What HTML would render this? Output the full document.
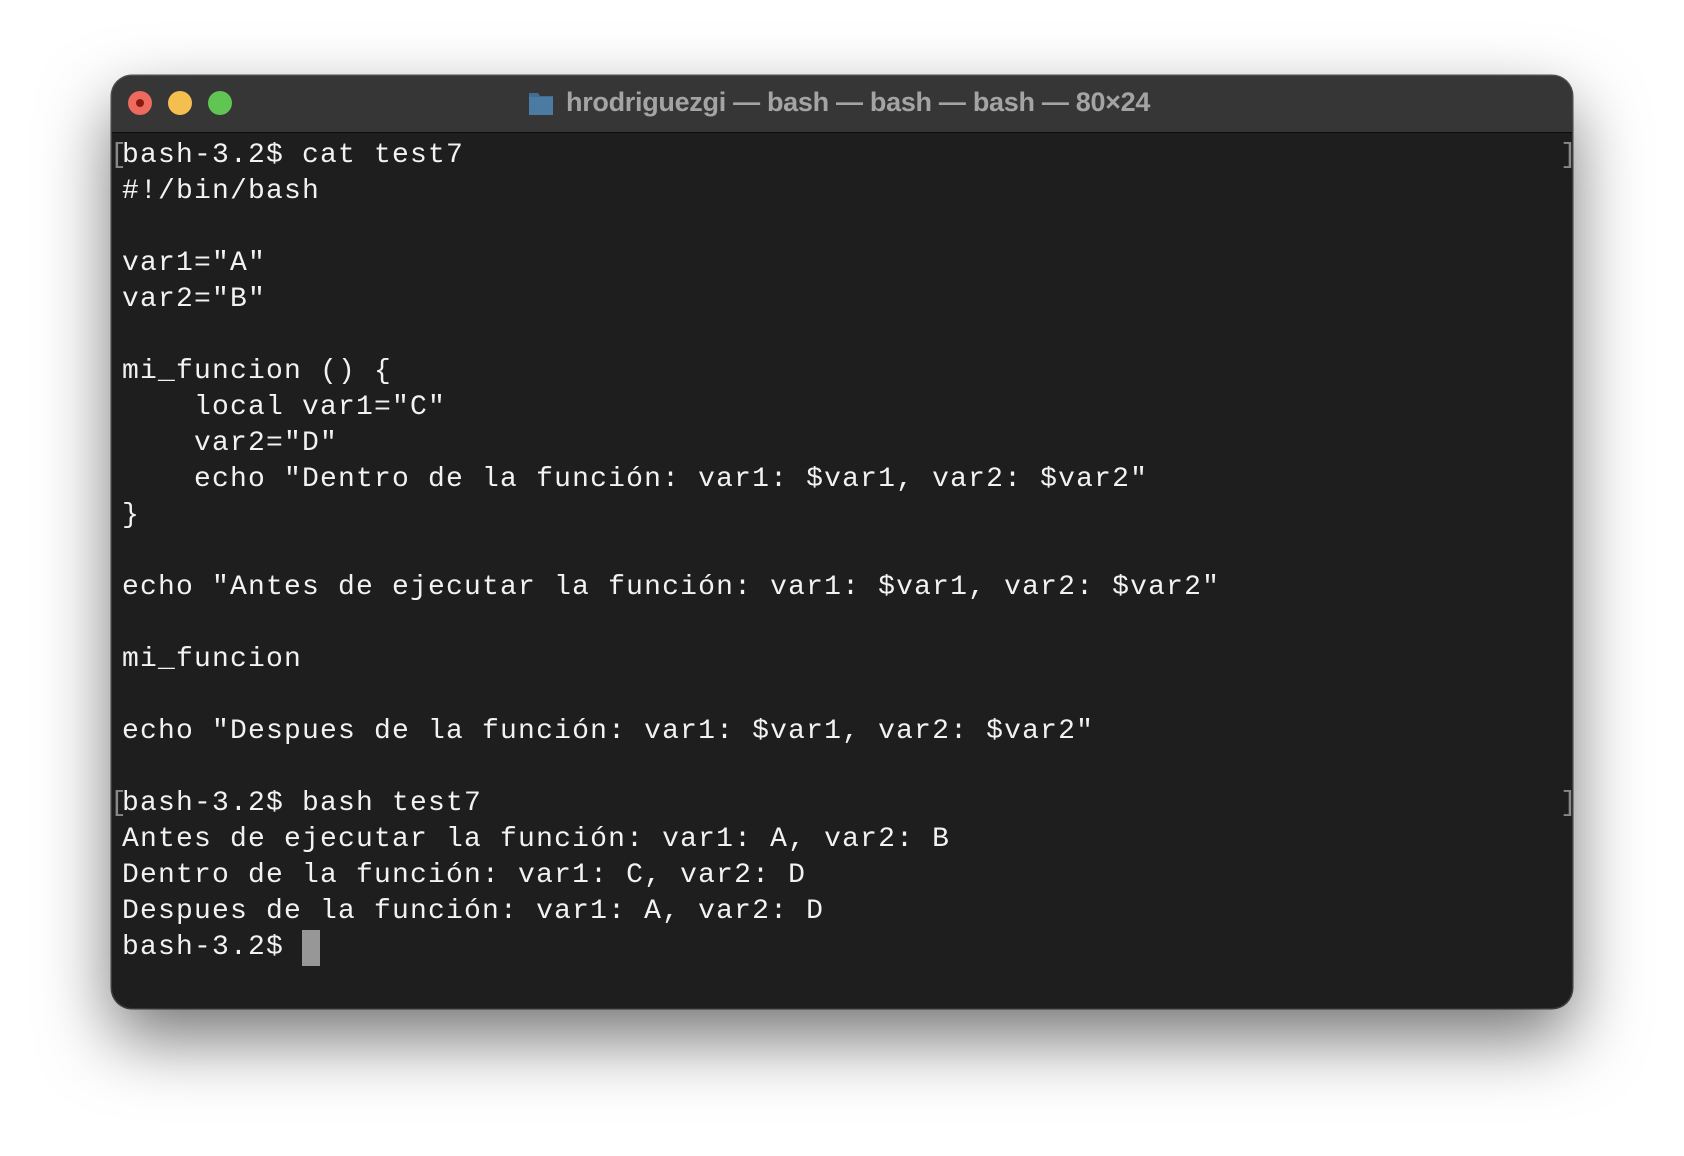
<!DOCTYPE html>
<html><head><meta charset="utf-8"><style>
html,body{margin:0;padding:0;background:#fff;width:1684px;height:1156px;overflow:hidden}
.win{position:absolute;left:112px;top:76px;width:1460px;height:932px;border-radius:20px;background:#1e1e1e;box-shadow:0 30px 70px rgba(0,0,0,.55),0 0 0 1.5px #555;overflow:hidden}
.tb{position:absolute;left:0;top:0;right:0;height:56px;background:#363636;border-bottom:1.5px solid #0c0c0c}
.l{position:absolute;top:15px;width:24px;height:24px;border-radius:50%}
.title{position:absolute;left:454px;top:11px;font:bold 27px "Liberation Sans",sans-serif;color:#a4a4a4;white-space:nowrap;letter-spacing:-0.3px}
.fold{position:absolute;left:416px;top:13px}
pre{position:absolute;left:10px;top:62px;margin:0;font:28px/36px "Liberation Mono",monospace;letter-spacing:1.2px;color:#f2f2f2}
.br{position:absolute;color:#888;font:28px/36px "Liberation Mono",monospace}
.cur{display:inline-block;width:18px;height:36px;background:#979797;vertical-align:top}
</style></head><body>
<div class="win">
<div class="tb">
<div class="l" style="left:16px;background:#ed6a5e"><div style="position:absolute;left:8px;top:8px;width:8px;height:8px;border-radius:50%;background:#8c1a10"></div></div>
<div class="l" style="left:56px;background:#f5bf4f"></div>
<div class="l" style="left:96px;background:#61c554"></div>
<svg class="fold" width="26" height="28" viewBox="0 0 26 28"><path d="M1 4h9l2 3h13v19H1z" fill="#3f6d94"/><rect x="1" y="8" width="24" height="18" fill="#4b7aa3"/></svg>
<div class="title">hrodriguezgi — bash — bash — bash — 80×24</div>
</div>
<div class="br" style="left:-2px;top:62px">[</div>
<div class="br" style="left:1448px;top:62px">]</div>
<div class="br" style="left:-2px;top:710px">[</div>
<div class="br" style="left:1448px;top:710px">]</div>
<pre>bash-3.2$ cat test7
#!/bin/bash

var1="A"
var2="B"

mi_funcion () {
    local var1="C"
    var2="D"
    echo "Dentro de la función: var1: $var1, var2: $var2"
}

echo "Antes de ejecutar la función: var1: $var1, var2: $var2"

mi_funcion

echo "Despues de la función: var1: $var1, var2: $var2"

bash-3.2$ bash test7
Antes de ejecutar la función: var1: A, var2: B
Dentro de la función: var1: C, var2: D
Despues de la función: var1: A, var2: D
bash-3.2$ <span class="cur"></span></pre>
</div>
</body></html>
